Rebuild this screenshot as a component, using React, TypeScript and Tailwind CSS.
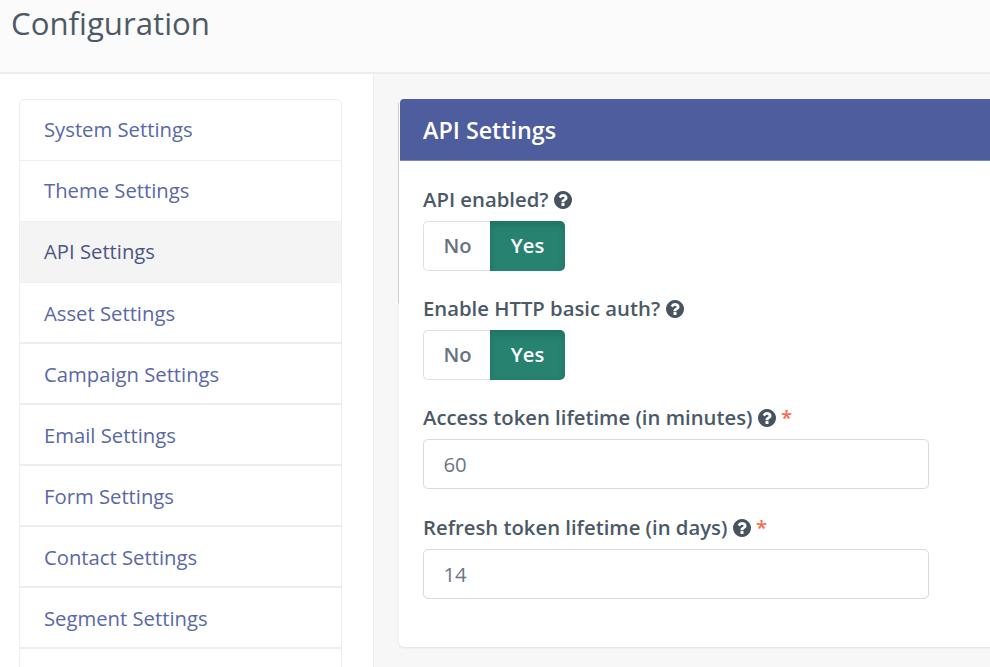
import React from "react";

const items = [
  { label: "System Settings" },
  { label: "Theme Settings" },
  { label: "API Settings", active: true },
  { label: "Asset Settings" },
  { label: "Campaign Settings" },
  { label: "Email Settings" },
  { label: "Form Settings" },
  { label: "Contact Settings" },
  { label: "Segment Settings" },
];

function HelpIcon() {
  return (
    <svg viewBox="128 128 1536 1536" className="h-[18px] w-[18px] shrink-0 fill-[#47535f]">
      <path d="M1024 1376v-192q0-14-9-23t-23-9h-192q-14 0-23 9t-9 23v192q0 14 9 23t23 9h192q14 0 23-9t9-23zm256-672q0-88-55.5-163t-138.5-116-170-41q-243 0-371 213-15 24 8 42l132 100q7 6 19 6 16 0 25-12 53-68 86-92 34-24 86-24 48 0 85.5 26t37.5 59q0 38-20 61t-68 45q-63 28-115.5 86.5t-52.5 125.5v36q0 14 9 23t23 9h192q14 0 23-9t9-23q0-19 21.5-49.5t54.5-49.5q32-18 49-28.5t46-35 44.5-48 28-60.5 12.5-81zm384 192q0 209-103 385.5t-279.5 279.5-385.5 103-385.5-103-279.5-279.5-103-385.5 103-385.5 279.5-279.5 385.5-103 385.5 103 279.5 279.5 103 385.5z" />
    </svg>
  );
}

function Label({ text, required }: { text: string; required?: boolean }) {
  return (
    <div className="flex h-7 items-center pb-px text-[20.3px] font-semibold leading-7 text-[#4b5967]">
      <span className="mr-[5.5px] whitespace-nowrap pb-px">{text}</span>
      <HelpIcon />
      {required && <span className="ml-[5px] pb-px text-[#f86b4f]">*</span>}
    </div>
  );
}

function Toggle() {
  return (
    <div className="mt-[7px] flex h-[50px] w-[142px] text-[20.2px] font-semibold">
      <button className="flex w-[67px] items-center justify-center rounded-l-[5px] border border-r-0 border-[#dfe0e2] bg-white pb-px pl-px text-[#667382]">
        No
      </button>
      <button className="flex w-[75px] items-center justify-center rounded-r-[5px] bg-[#278270] pb-px text-white shadow-[inset_0_4px_7px_rgba(0,0,0,0.13)]">
        Yes
      </button>
    </div>
  );
}

function Field({ value }: { value: string }) {
  return (
    <input
      readOnly
      value={value}
      className="mt-[7px] block h-[50px] w-[506px] rounded-[5px] border border-[#d9dadc] bg-white px-[19.5px] text-[20.3px] text-[#6b7785] outline-none"
    />
  );
}

export default function App() {
  return (
    <div className="flex h-[667px] w-[990px] flex-col overflow-hidden bg-white font-['Open_Sans',sans-serif]">
      <header className="h-[74px] shrink-0 border-b-2 border-[#ededef] bg-[#fbfbfb] pl-[11px]">
        <h1 className="text-[31.2px] leading-[46px] text-[#4d5a66]">Configuration</h1>
      </header>
      <div className="flex min-h-0 flex-1">
        <aside className="w-[374px] shrink-0 overflow-hidden border-r border-[#ededee] bg-white pl-[19px] pt-[25px]">
          <ul className="h-[700px] w-[323px] overflow-hidden rounded-t-[5px] border border-[#eeeeef]">
            {items.map((item, i) => (
              <li
                key={item.label}
                className={`flex h-[61px] items-center pl-6 text-[20.25px] ${
                  i >= 3 ? "border-b-2 border-[#ededf1] pt-px" : "border-b border-[#efeff0] pb-px"
                } ${item.active ? "bg-[#f4f4f4] text-[#4c5685]" : "text-[#5968a6]"}`}
              >
                {item.label}
              </li>
            ))}
          </ul>
        </aside>
        <main className="min-w-0 flex-1 bg-[#f7f7f7] pl-[25px] pt-[25px]">
          <section className="relative h-[548px] w-[620px] rounded-[5px] bg-white shadow-[0_1px_2px_rgba(0,0,0,0.09)]">
            <span className="absolute left-[-1px] top-1 h-[200px] w-px bg-[#cfcfd1]" />
            <div className="ml-px flex h-[62px] items-center rounded-tl-[4px] border-b border-[#7c87b7] bg-[#4e5d9d] pl-[23px] pt-0.5 text-[23.3px] font-semibold text-white">
              API Settings
            </div>
            <div className="pl-6 pt-[25px]">
              <Label text="API enabled?" />
              <Toggle />
              <div className="mt-6">
                <Label text="Enable HTTP basic auth?" />
                <Toggle />
              </div>
              <div className="mt-6">
                <Label text="Access token lifetime (in minutes)" required />
                <Field value="60" />
              </div>
              <div className="mt-[25px]">
                <Label text="Refresh token lifetime (in days)" required />
                <Field value="14" />
              </div>
            </div>
          </section>
        </main>
      </div>
    </div>
  );
}
